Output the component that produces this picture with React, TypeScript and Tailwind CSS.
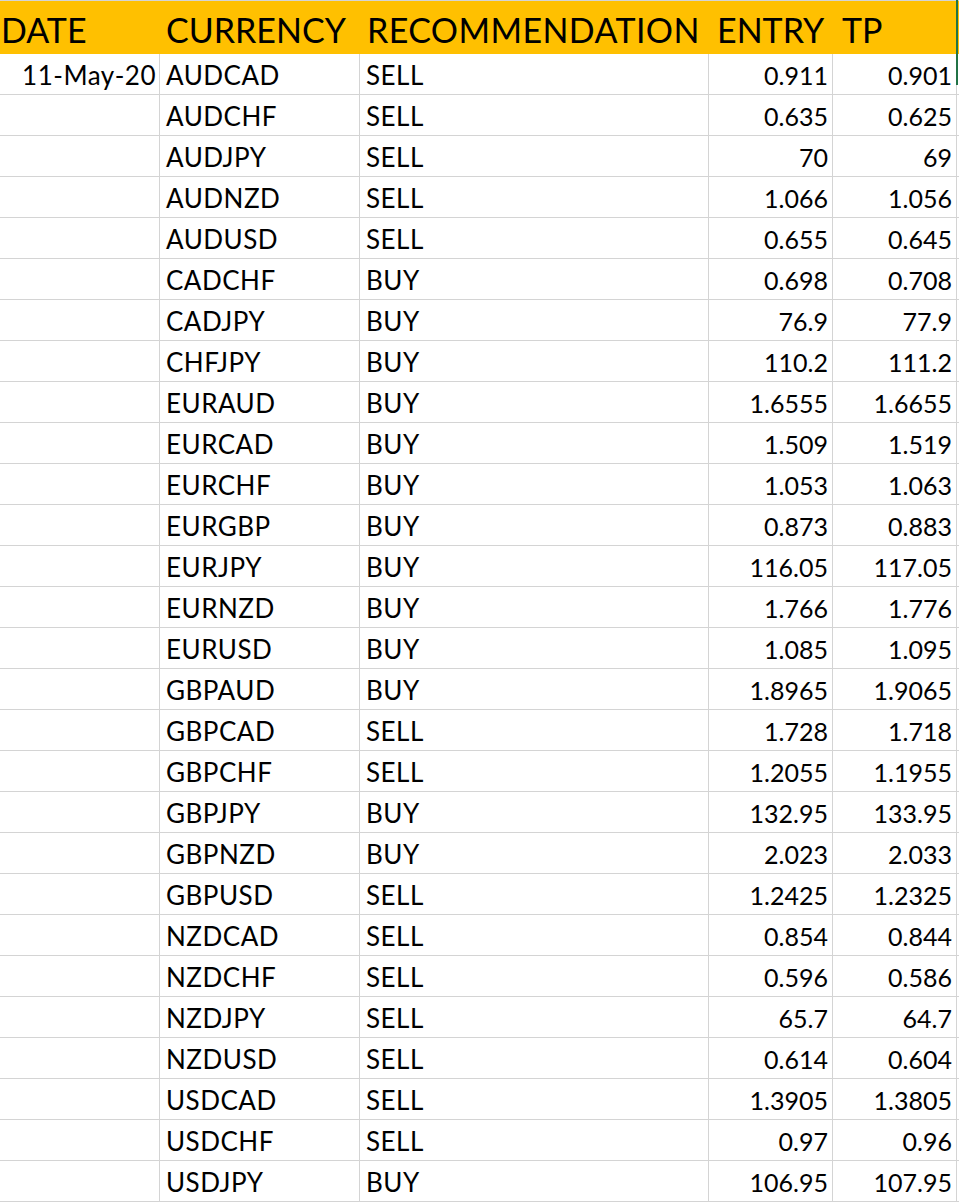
import React from "react";

type Row = [string, string, string, string];

// pair, call, entry, take profit
const rows: Row[] = [
  ["AUDCAD", "SELL", "0.911", "0.901"],
  ["AUDCHF", "SELL", "0.635", "0.625"],
  ["AUDJPY", "SELL", "70", "69"],
  ["AUDNZD", "SELL", "1.066", "1.056"],
  ["AUDUSD", "SELL", "0.655", "0.645"],
  ["CADCHF", "BUY", "0.698", "0.708"],
  ["CADJPY", "BUY", "76.9", "77.9"],
  ["CHFJPY", "BUY", "110.2", "111.2"],
  ["EURAUD", "BUY", "1.6555", "1.6655"],
  ["EURCAD", "BUY", "1.509", "1.519"],
  ["EURCHF", "BUY", "1.053", "1.063"],
  ["EURGBP", "BUY", "0.873", "0.883"],
  ["EURJPY", "BUY", "116.05", "117.05"],
  ["EURNZD", "BUY", "1.766", "1.776"],
  ["EURUSD", "BUY", "1.085", "1.095"],
  ["GBPAUD", "BUY", "1.8965", "1.9065"],
  ["GBPCAD", "SELL", "1.728", "1.718"],
  ["GBPCHF", "SELL", "1.2055", "1.1955"],
  ["GBPJPY", "BUY", "132.95", "133.95"],
  ["GBPNZD", "BUY", "2.023", "2.033"],
  ["GBPUSD", "SELL", "1.2425", "1.2325"],
  ["NZDCAD", "SELL", "0.854", "0.844"],
  ["NZDCHF", "SELL", "0.596", "0.586"],
  ["NZDJPY", "SELL", "65.7", "64.7"],
  ["NZDUSD", "SELL", "0.614", "0.604"],
  ["USDCAD", "SELL", "1.3905", "1.3805"],
  ["USDCHF", "SELL", "0.97", "0.96"],
  ["USDJPY", "BUY", "106.95", "107.95"],
];

const cols = "grid grid-cols-[160px_200px_349px_124px_124px]";

export default function App() {
  return (
    <div className="relative w-[959px] h-[1203px] overflow-hidden bg-white text-black font-['Lato','Liberation_Sans',sans-serif]">
      {/* header */}
      <div className="border-t border-[#d4d4d4]">
        <div className={`${cols} h-[53px] bg-[#ffc000] text-[34px] leading-none`}>
          <div className="flex items-center pl-[1px] pt-[4px]">DATE</div>
          <div className="flex items-center pl-[6px] pt-[4px]">CURRENCY</div>
          <div className="flex items-center pl-[7px] pt-[4px] tracking-[0.4px]">RECOMMENDATION</div>
          <div className="flex items-center pl-[8px] pt-[4px]">ENTRY</div>
          <div className="flex items-center pl-[9px] pt-[4px]">TP</div>
        </div>
      </div>

      {rows.map((r, i) => (
        <div key={r[0]} className={`${cols} h-[41px] border-b border-[#d4d4d4] leading-none`}>
          <div className="flex items-end justify-end pr-[3px] pb-[6px] border-r border-[#d4d4d4] text-[26px] tracking-[0.5px]">
            {i === 0 ? "11-May-20" : ""}
          </div>
          <div className="flex items-end pl-[6px] pb-[6px] border-r border-[#d4d4d4] text-[26px] tracking-[0.5px]">{r[0]}</div>
          <div className="flex items-end pl-[6px] pb-[6px] border-r border-[#d4d4d4] text-[26px] tracking-[0.5px]">{r[1]}</div>
          <div className="flex items-end justify-end pr-[4px] pb-[6px] border-r border-[#d4d4d4] text-[25px]">{r[2]}</div>
          <div className="flex items-end justify-end pr-[4px] pb-[6px] border-r border-[#d4d4d4] text-[25px]">{r[3]}</div>
        </div>
      ))}

      {/* active cell edge */}
      <div className="absolute right-[1px] top-0 w-[2px] h-[85px] bg-[#217346]" />
    </div>
  );
}
